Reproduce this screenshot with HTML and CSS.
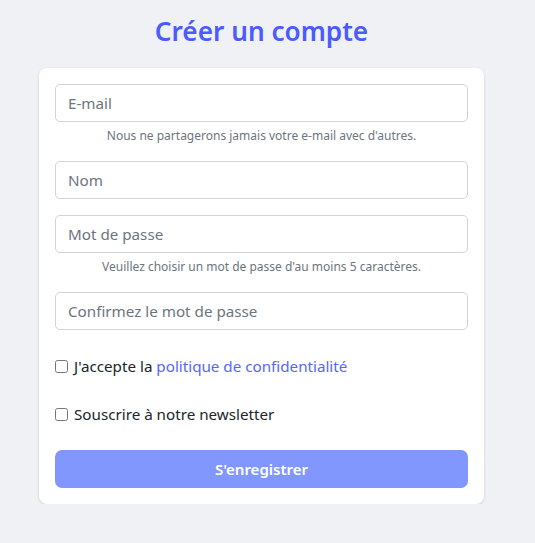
FILE: index.html
```html
<!DOCTYPE html>
<html lang="fr">
<head>
<meta charset="utf-8">
<title>Créer un compte</title>
<link rel="stylesheet" href="styles.css">
</head>
<body>
<main class="page">
  <h1 class="title">Créer un compte</h1>
  <form class="card">
    <div class="group">
      <input class="field" type="email" placeholder="E-mail">
      <p class="help">Nous ne partagerons jamais votre e-mail avec d'autres.</p>
    </div>
    <div class="group">
      <input class="field" type="text" placeholder="Nom">
    </div>
    <div class="group">
      <input class="field" type="password" placeholder="Mot de passe">
      <p class="help">Veuillez choisir un mot de passe d'au moins 5 caractères.</p>
    </div>
    <div class="group">
      <input class="field" type="password" placeholder="Confirmez le mot de passe">
    </div>
    <label class="check">
      <input type="checkbox" class="box">
      <span>J'accepte la <a href="#" class="link">politique de confidentialité</a></span>
    </label>
    <label class="check">
      <input type="checkbox" class="box">
      <span>Souscrire à notre newsletter</span>
    </label>
    <button type="button" class="submit">S'enregistrer</button>
  </form>
</main>
</body>
</html>
```

FILE: styles.css
```css
* { box-sizing: border-box; }
html, body {
  margin: 0;
  background: #f0f1f5;
}
body {
  font-family: "Noto Sans", "Open Sans", sans-serif;
  color: #212529;
  padding-right: 12px;
}
.page {
  width: 445px;
  margin: 0 auto;
  padding-top: 10px;
}
.title {
  margin: 0 0 16px;
  text-align: center;
  font-size: 26.2px;
  line-height: 42px;
  font-weight: 600;
  color: #4a5cfe;
}
.card {
  background: #fff;
  border-radius: 8px;
  box-shadow: 0 1px 3px rgba(0,0,0,0.14);
  padding: 16px;
  display: flex;
  flex-direction: column;
}
.group {
  margin-bottom: 16px;
}
.field {
  display: block;
  width: 100%;
  height: 38px;
  padding: 6px 12px;
  font: inherit;
  font-size: 15.2px;
  color: #212529;
  border: 1px solid #ced4da;
  border-radius: 5px;
  background: #fff;
}
.field::placeholder { color: #6c757d; }
.help {
  margin: 4px 0 0;
  font-size: 12px;
  line-height: 19px;
  color: #6c757d;
  text-align: center;
}
.check {
  display: flex;
  align-items: center;
  height: 48px;
  font-size: 15.2px;
  color: #212529;
}
.check:first-of-type { margin-top: -4px; }
.box {
  width: 13px;
  height: 13px;
  margin: 0 6px 0 0;
}
.link {
  color: #5468ff;
  text-decoration: none;
}
.submit {
  margin-top: 12px;
  height: 38px;
  border: 0;
  border-radius: 7px;
  background: #8197fe;
  color: #fff;
  font: inherit;
  font-size: 15px;
  font-weight: 600;
}
```
